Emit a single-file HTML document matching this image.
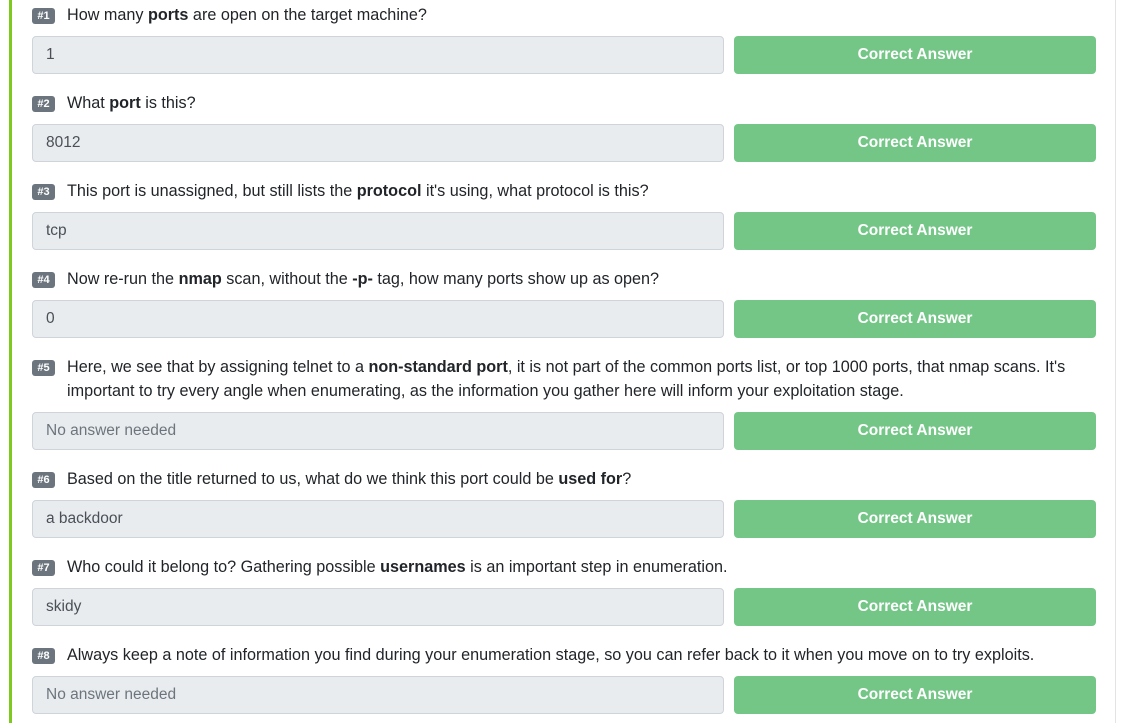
<!DOCTYPE html>
<html><head><style>
body{margin:0;width:1121px;height:723px;overflow:hidden;background:#fff;font-family:"Liberation Sans",sans-serif;position:relative;}
.gl{position:absolute;left:9px;top:0;width:3px;height:723px;background:#7ec820;}
.gr{position:absolute;left:1115px;top:0;width:1px;height:723px;background:#e3e3e3;}
.qt{position:absolute;left:67px;width:1045px;font-size:16.2px;line-height:24px;color:#212529;white-space:nowrap;}
.badge{position:absolute;left:32px;background:#6c757d;color:#fff;font-size:11px;font-weight:bold;border-radius:3px;width:23px;height:16px;line-height:16px;text-align:center;}
.in{position:absolute;left:32px;width:677px;height:36px;border:1px solid #ced4da;background:#e9ecef;border-radius:4px;padding-left:13px;font-size:15.5px;line-height:36px;color:#495057;}
.btn{position:absolute;left:734px;width:362px;height:38px;background:#74c687;border-radius:4px;color:#fff;font-size:15.5px;font-weight:bold;text-align:center;line-height:38px;}
.ph{color:#6c757d;}
</style></head><body>
<div class="gl"></div><div class="gr"></div>

<span class="badge" style="top:8px">#1</span><div class="qt" style="top:3px">How many <b>ports</b> are open on the target machine?</div>
<div class="in" style="top:36px">1</div><div class="btn" style="top:36px">Correct Answer</div>

<span class="badge" style="top:96px">#2</span><div class="qt" style="top:91px">What <b>port</b> is this?</div>
<div class="in" style="top:124px">8012</div><div class="btn" style="top:124px">Correct Answer</div>

<span class="badge" style="top:184px">#3</span><div class="qt" style="top:179px">This port is unassigned, but still lists the <b>protocol</b> it's using, what protocol is this?</div>
<div class="in" style="top:212px">tcp</div><div class="btn" style="top:212px">Correct Answer</div>

<span class="badge" style="top:272px">#4</span><div class="qt" style="top:267px">Now re-run the <b>nmap</b> scan, without the <b>-p-</b> tag, how many ports show up as open?</div>
<div class="in" style="top:300px">0</div><div class="btn" style="top:300px">Correct Answer</div>

<span class="badge" style="top:360px">#5</span><div class="qt" style="top:355px">Here, we see that by assigning telnet to a <b>non-standard port</b>, it is not part of the common ports list, or top 1000 ports, that nmap scans. It's<br>important to try every angle when enumerating, as the information you gather here will inform your exploitation stage.</div>
<div class="in ph" style="top:412px">No answer needed</div><div class="btn" style="top:412px">Correct Answer</div>

<span class="badge" style="top:472px">#6</span><div class="qt" style="top:467px">Based on the title returned to us, what do we think this port could be <b>used for</b>?</div>
<div class="in" style="top:500px">a backdoor</div><div class="btn" style="top:500px">Correct Answer</div>

<span class="badge" style="top:560px">#7</span><div class="qt" style="top:555px">Who could it belong to? Gathering possible <b>usernames</b> is an important step in enumeration.</div>
<div class="in" style="top:588px">skidy</div><div class="btn" style="top:588px">Correct Answer</div>

<span class="badge" style="top:648px">#8</span><div class="qt" style="top:643px">Always keep a note of information you find during your enumeration stage, so you can refer back to it when you move on to try exploits.</div>
<div class="in ph" style="top:676px">No answer needed</div><div class="btn" style="top:676px">Correct Answer</div>
</body></html>
